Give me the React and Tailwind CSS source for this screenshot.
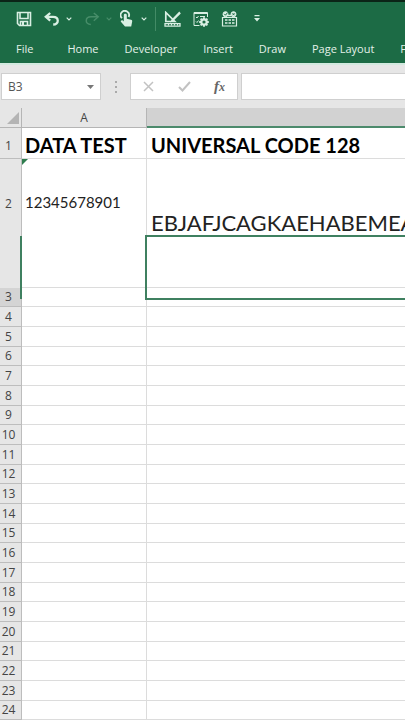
import { useState } from 'react';

const tabs = ['Home', 'Developer', 'Insert', 'Draw', 'Page Layout', 'Formulas'];

const rows = Array.from({ length: 24 }, (_, i) => i + 1);

const cells = {
  A1: 'DATA TEST',
  B1: 'UNIVERSAL CODE 128',
  A2: '12345678901',
  B2: 'EBJAFJCAGKAEHABEMEA',
};

const cellStyles = {
  A1: 'text-xl leading-6 pt-1 font-bold text-black align-middle',
  B1: 'text-xl leading-6 pt-1 font-bold text-black align-middle',
  A2: 'text-[15px] pb-[41px] align-middle',
  B2: 'text-[22px] leading-6 pt-[52px] align-top',
};

function rowHeight(n) {
  if (n === 1) return 'h-[31px]';
  if (n === 2) return 'h-[129px]';
  return n % 3 === 0 ? 'h-[19px]' : 'h-5';
}

function Chevron() {
  return (
    <svg width="6" height="4" viewBox="0 0 6 4" fill="none" stroke="currentColor" strokeWidth="1.2">
      <path d="M0.7 0.7 3 3 5.3 0.7" />
    </svg>
  );
}

function SaveIcon() {
  return (
    <svg width="16" height="16" viewBox="0 0 16 16" fill="none" stroke="currentColor" strokeWidth="1.6">
      <path d="M1.5 1.5h13v13h-11l-2-2z" />
      <path d="M4 2v5.5h8V2M4.5 14.5v-4h7v4" />
      <path d="M6 11h2v3.5H6z" fill="currentColor" stroke="none" />
    </svg>
  );
}

function UndoIcon() {
  return (
    <svg width="16" height="14" viewBox="0 0 16 14" fill="none" stroke="currentColor" strokeWidth="2.3">
      <path d="M6.2 1 1.8 4.8l4.4 3.9" />
      <path d="M2 4.8h7c6.3 0 6.3 7.7.2 7.7" />
    </svg>
  );
}

function RedoIcon() {
  return (
    <svg width="16" height="14" viewBox="0 0 16 14" fill="none" stroke="currentColor" strokeWidth="1.5">
      <path d="M9.8 1 14.2 4.8 9.8 8.7" />
      <path d="M14 4.8H7c-6.3 0-6.3 7.7-.2 7.7" />
    </svg>
  );
}

function TouchIcon() {
  return (
    <svg width="13" height="17" viewBox="0 0 13 17" fill="none" stroke="currentColor">
      <path d="M2 8.2A4.2 4.2 0 1 1 8.6 7" strokeWidth="1.8" />
      <path
        d="M3.8 5c0-1.8 3-1.8 3 0v3.8l4.2 1c1 .2 1.3.8 1.2 1.6l-1 5.1H5L.9 11.8c-.6-1 .9-2 1.900-1.200l1 .9z"
        fill="currentColor"
        stroke="none"
      />
    </svg>
  );
}

function DesignModeIcon() {
  return (
    <svg width="17" height="16" viewBox="0 0 17 16" fill="none" stroke="currentColor">
      <path d="M1.8 1.500v9h9z" strokeWidth="1.700" />
      <path d="M1 12.700h15v2.500H1z" strokeWidth="1.300" />
      <path d="M4.500 13v1.500M7.500 13v1.500M10.500 13v1.500M13.500 13v1.500" strokeWidth="1" />
      <path d="M15.300.600 7.600 8.600l-1.600 3 3-1.400 7.800-7.800z" fill="currentColor" stroke="none" />
    </svg>
  );
}

function PropertiesIcon() {
  return (
    <svg width="16" height="16" viewBox="0 0 16 16" fill="none" stroke="currentColor">
      <path d="M6.500 14.500H1v-13h13.500V6M1 2.500h13" />
      <path d="M3 6l1 1 1.500-2M3 10.500l1 1 1.500-2M7 5.500h5" />
      <circle cx="11" cy="11" r="2.700" strokeWidth="2.200" />
      <path d="M11 6.200v2M11 13.800v2M6.200 11h2M13.800 11h2M7.600 7.600 9 9M13 13l1.400 1.400M14.400 7.600 13 9M9 13l-1.400 1.400" strokeWidth="1.900" />
    </svg>
  );
}

function ControlsIcon() {
  return (
    <svg width="17" height="16" viewBox="0 0 17 16" fill="none" stroke="currentColor">
      <path d="M1.500 6v9h14V6M1.500 6.500h14" strokeWidth="1.200" />
      <circle cx="4.500" cy="3.200" r="2.500" fill="currentColor" />
      <circle cx="12.500" cy="3.200" r="2.500" fill="currentColor" />
      <path d="M7 4.500h3" strokeWidth="1.500" />
      <path d="M3.300 2.900l1.200 1.300L6.500 1.600M11.500 2.200l2 2M13.500 2.200l-2 2" stroke="#1c6b45" />
      <path d="M4 9h2.500M7.500 9H10M11 9h2.500M4 12h2.500M7.500 12H10M11 12h2.500" strokeWidth="1.500" />
    </svg>
  );
}

function QuickAccess() {
  return (
    <div className="flex h-[33px] items-center pl-4 text-[#d9efe3]">
      <button aria-label="Save" className="mr-3 shrink-0"><SaveIcon /></button>
      <button aria-label="Undo" className="flex shrink-0 items-center gap-1.5">
        <UndoIcon />
        <Chevron />
      </button>
      <button aria-label="Redo" className="ml-3 flex shrink-0 items-center gap-1.5 text-[#478d69]">
        <RedoIcon />
        <Chevron />
      </button>
      <button aria-label="Touch mode" className="ml-2 flex shrink-0 items-center gap-2">
        <TouchIcon />
        <Chevron />
      </button>
      <span className="mx-2 h-6 w-px shrink-0 bg-[#438b66]" />
      <button aria-label="Design mode" className="shrink-0"><DesignModeIcon /></button>
      <button aria-label="Properties" className="ml-3 shrink-0"><PropertiesIcon /></button>
      <button aria-label="Insert controls" className="ml-3 shrink-0"><ControlsIcon /></button>
      <button aria-label="Customize toolbar" className="ml-4 shrink-0">
        <svg width="6" height="7" viewBox="0 0 6 7" fill="currentColor">
          <path d="M0.500 0h5v1.200h-5zM0 3h6L3 6.500z" />
        </svg>
      </button>
    </div>
  );
}

function FormulaBar({ formula, onChange }) {
  return (
    <div className="flex h-[27px] pl-px text-[#555]">
      <div className="flex w-[100px] shrink-0 items-center justify-between border border-[#cfcfcf] bg-white px-1.5">
        <input aria-label="Name box" defaultValue="B3" className="w-12 bg-transparent text-xs outline-none" />
        <button aria-label="Open name list">
          <svg width="7" height="4" viewBox="0 0 7 4" fill="#777"><path d="M0 0h7L3.500 4z" /></svg>
        </button>
      </div>
      <div className="flex w-[29px] shrink-0 flex-col items-center justify-center gap-[3px]">
        <span className="size-0.5 bg-[#aaa]" />
        <span className="size-0.5 bg-[#aaa]" />
        <span className="size-0.5 bg-[#aaa]" />
      </div>
      <div className="flex w-[108px] shrink-0 items-center justify-between border border-[#cfcfcf] bg-white px-3">
        <button aria-label="Cancel">
          <svg width="11" height="11" viewBox="0 0 11 11" stroke="#c2c2c2" strokeWidth="1.500">
            <path d="M1 1l9 9M10 1 1 10" />
          </svg>
        </button>
        <button aria-label="Enter">
          <svg width="13" height="11" viewBox="0 0 13 11" fill="none" stroke="#c2c2c2" strokeWidth="2">
            <path d="M1 6l3.500 3.500L12 1" />
          </svg>
        </button>
        <button aria-label="Insert function" className="font-['Liberation_Serif',serif] text-[15px] leading-4 font-bold text-[#666] italic">
          f<span className="text-xs">x</span>
        </button>
      </div>
      <input
        aria-label="Formula"
        value={formula}
        onChange={(e) => onChange(e.target.value)}
        className="ml-[3px] min-w-0 flex-1 border border-r-0 border-[#cfcfcf] bg-white px-2 text-xs outline-none"
      />
    </div>
  );
}

function Sheet() {
  return (
    <table className="w-full table-fixed border-separate border-spacing-0 font-['Lato',sans-serif] text-[#222]">
      <colgroup>
        <col className="w-[22px]" />
        <col className="w-[125px]" />
        <col />
      </colgroup>
      <thead className="font-['Open_Sans',sans-serif] text-xs leading-4 text-[#444]">
        <tr className="h-5">
          <th className="border-r border-b border-[#b5b5b5] bg-[#e6e6e6] p-0">
            <svg width="12" height="12" viewBox="0 0 12 12" fill="#b4b4b4" className="mr-0.5 ml-auto">
              <path d="M12 0v12H0z" />
            </svg>
          </th>
          <th className="border-r border-b border-[#b5b5b5] bg-[#e6e6e6] p-0 font-medium">A</th>
          <th aria-label="B" className="border-b-2 border-[#4c8a6c] bg-[#d2d2d2] p-0" />
        </tr>
      </thead>
      <tbody>
        {rows.map((n) => (
          <tr key={n} className={rowHeight(n)}>
            <th
              className={`relative border-r border-b border-[#bdbdbd] p-0 pr-1 text-center font-['Open_Sans',sans-serif] text-xs leading-4 font-medium text-[#444] ${
                n === 3 ? 'bg-[#d4d4d4]' : 'bg-[#e6e6e6]'
              } ${n === 2 ? 'border-b-[#e6e6e6] pb-[39px]' : ''} ${n === 1 ? 'pt-1.5' : ''}`}
            >
              {n}
              {n === 3 && <span className="absolute -right-px bottom-[7px] h-[63px] w-0.5 bg-[#3f8060]" />}
            </th>
            {['A', 'B'].map((col) => (
              <td
                key={col}
                className={`relative border-b border-[#dcdcdc] p-0 whitespace-nowrap ${
                  col === 'A' ? 'border-r pl-[3px]' : 'pl-1'
                } ${cellStyles[col + n] ?? ''}`}
              >
                {cells[col + n]}
                {col + n === 'A2' && (
                  <svg width="6" height="6" viewBox="0 0 6 6" fill="#2f7d4f" className="absolute top-0 left-0">
                    <path d="M0 0h6L0 6z" />
                  </svg>
                )}
                {col + n === 'B3' && (
                  <span className="absolute right-0 bottom-[6px] -left-0.5 h-[65px] border-2 border-r-0 border-[#3f8060]" />
                )}
              </td>
            ))}
          </tr>
        ))}
      </tbody>
    </table>
  );
}

export default function App() {
  const [formula, setFormula] = useState('');

  return (
    <div className="min-h-screen overflow-hidden bg-white font-['Open_Sans',sans-serif]">
      <header className="border-t-2 border-b-2 border-t-[#0b2417] border-b-[#d3e9df] bg-[#1c6b45]">
        <QuickAccess />
        <nav className="flex h-7 items-center gap-[26px] pl-4 text-[11px] font-medium whitespace-nowrap text-[#e3f1e9]">
          <a href="#file" className="mr-2">File</a>
          {tabs.map((tab) => (
            <a key={tab} href={`#${tab.toLowerCase().replace(' ', '-')}`}>{tab}</a>
          ))}
        </nav>
      </header>
      <div className="bg-[#e6e6e6] py-2">
        <FormulaBar formula={formula} onChange={setFormula} />
      </div>
      <Sheet />
    </div>
  );
}
